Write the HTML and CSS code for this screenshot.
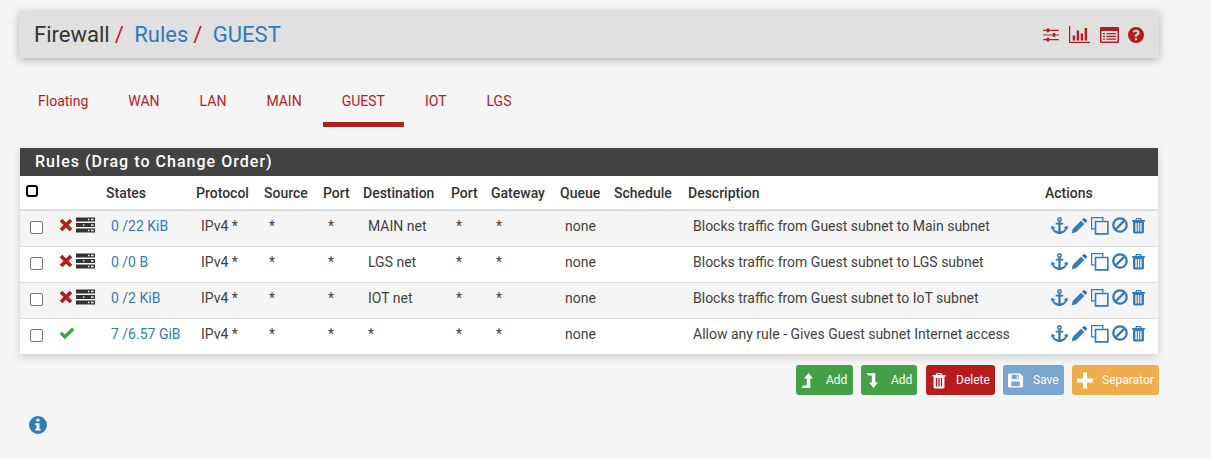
FILE: index.html
```html
<!DOCTYPE html>
<html lang="en">
<head>
<meta charset="utf-8">
<title>Firewall / Rules / GUEST</title>
<link rel="stylesheet" href="styles.css">
</head>
<body>
<svg class="defs" width="0" height="0" aria-hidden="true">
  <symbol id="anchor" viewBox="0 0 20 20"><path d="M10 1a2.600 2.600 0 0 0-1.200 4.900V7H6v2h2.800v7.300C6.600 16 4.700 14.800 4 13.200l1.500-.9L1.800 10 .8 14l1.300-.8C3.300 16.600 6.400 19 10 19s6.700-2.400 7.900-5.800l1.300.8-1-4-3.700 2.300 1.500.9c-.7 1.600-2.600 2.800-4.800 3.100V9H14V7h-2.800V5.900A2.600 2.600 0 0 0 10 1zm0 1.700a.9.900 0 1 1 0 1.800.9.900 0 0 1 0-1.800z"/></symbol>
  <symbol id="pencil" viewBox="0 0 18 18"><path d="M13.300 1.200a1 1 0 0 1 1.400 0l2.100 2.100a1 1 0 0 1 0 1.400l-1.700 1.700-3.500-3.500zM10.600 3.900l3.500 3.500-8.800 8.800L.8 17.200l1-4.500z"/></symbol>
  <symbol id="clone" viewBox="0 0 20 20"><path fill="none" stroke="currentColor" stroke-width="1.300" d="M13.500 5V1.700H1.700v11.800H5"/><path fill="none" stroke="currentColor" stroke-width="1.700" d="M5.800 5.800h13v13h-13z"/></symbol>
  <symbol id="ban" viewBox="0 0 16 16"><circle cx="8" cy="8" r="6.700" fill="none" stroke="currentColor" stroke-width="2.300"/><path d="M3.400 12.600 12.600 3.400" fill="none" stroke="currentColor" stroke-width="2.300"/></symbol>
  <symbol id="trash" viewBox="0 0 16 18"><path fill-rule="evenodd" d="M5.500 1h5l1 2.200H15v1.600h-1.200V16a1.500 1.500 0 0 1-1.500 1.500H3.700A1.500 1.500 0 0 1 2.200 16V4.800H1V3.200h3.500zM6.300 2.300 5.900 3.200h4.200l-.4-.9zM4.700 6.300v9h1.400v-9zm2.600 0v9h1.400v-9zm2.600 0v9h1.400v-9z"/></symbol>
  <symbol id="cross" viewBox="0 0 16 16"><path d="M3.800.8 8 5l4.200-4.200 3 3L11 8l4.200 4.200-3 3L8 11l-4.200 4.200-3-3L5 8 .8 3.800z"/></symbol>
  <symbol id="server" viewBox="0 0 19 16"><path fill-rule="evenodd" d="M0 .5h19v4H0zm12 1.300v1.400h1.400V1.800zm3 0v1.400h2.600V1.800zM0 6h19v4H0zm7 1.300v1.400h1.400V7.300zm8 0v1.400h2.600V7.300zM0 11.500h19v4H0zm12 1.300v1.400h1.400v-1.400zm3 0v1.400h2.600v-1.400z"/></symbol>
  <symbol id="check" viewBox="0 0 17 14"><path d="M6.200 13.200.6 7.600l2.500-2.500 3.100 3.100L13.900.6l2.500 2.500z"/></symbol>
  <symbol id="up" viewBox="0 0 12 17"><path d="M7.500 1 12 6.500H9.300V16H.5l1.800-2.500h3.500v-7H3z"/></symbol>
  <symbol id="down" viewBox="0 0 12 17"><path d="M.5 1h8.800v9.500H12L7.500 16 3 10.500h2.800v-7H2.300z"/></symbol>
  <symbol id="save" viewBox="0 0 17 17"><path fill-rule="evenodd" d="M1.500 1h11.300L16 4.200v10.300a1.500 1.500 0 0 1-1.500 1.500h-13A1.500 1.500 0 0 1 0 14.500v-12A1.500 1.500 0 0 1 1.500 1zm2.500 1.500v4.300h7.500V2.500zm5.300.7h1.500v2.900H9.300zM3.500 9.500v5h9v-5z"/></symbol>
  <symbol id="plus" viewBox="0 0 16 16"><path d="M6 0h4v6h6v4h-6v6H6v-6H0V6h6z"/></symbol>
  <symbol id="info" viewBox="0 0 18 18"><path fill-rule="evenodd" d="M9 0a9 9 0 1 1 0 18A9 9 0 0 1 9 0zM7.300 2.800v2.600h3.200V2.800zM6.200 7.200v1.700h1.200v3.800H6.200v1.700h5.500v-1.700h-1.200V7.200z"/></symbol>
  <symbol id="question" viewBox="0 0 16 16"><path fill-rule="evenodd" d="M8 0a8 8 0 1 1 0 16A8 8 0 0 1 8 0zM6.900 11.200v2.100h2.200v-2.100zM8.100 2.700c-1.700 0-2.900.8-3.600 2l1.500 1.100c.5-.6.900-1 1.800-1 .7 0 1.300.4 1.300 1 0 .6-.5.900-1.200 1.300-.9.500-1.100 1.100-1.100 1.900v.7h2.200v-.4c0-.4.200-.6.900-1 .9-.5 1.600-1.300 1.600-2.600 0-1.900-1.600-3-3.400-3z"/></symbol>
  <symbol id="sliders" viewBox="0 0 18 16"><path d="M0 2h4V.5h3V2h11v1.300H7v1.500H4V3.300H0zm0 5.300h11V5.800h3v1.500h4v1.300h-4v1.500h-3V8.600H0zm0 5.400h4v-1.500h3v1.500h11V14H7v1.500H4V14H0z"/></symbol>
  <symbol id="chart" viewBox="0 0 21 17"><path d="M0 0h1.200v15.800H21V17H0zM3.700 9.500h2.400v5H3.700zm4-5h2.400v10H7.700zm4 3h2.400v7h-2.400zm4-5.500h2.400v12.500h-2.400z"/></symbol>
  <symbol id="list" viewBox="0 0 19 16"><path fill-rule="evenodd" d="M1 0h17a1 1 0 0 1 1 1v14a1 1 0 0 1-1 1H1a1 1 0 0 1-1-1V1a1 1 0 0 1 1-1zm.5 4v10.500h16V4zM3 6h2v1.300H3zm3.500 0H16v1.300H6.500zM3 8.700h2V10H3zm3.500 0H16V10H6.500zM3 11.400h2v1.300H3zm3.500 0H16v1.300H6.500z"/></symbol>
</svg>

<header class="page-bar">
  <h1 class="crumbs">
    <span>Firewall</span><span class="sep">/</span>
    <a href="#">Rules</a><span class="sep">/</span>
    <a href="#">GUEST</a>
  </h1>
  <div class="bar-icons">
    <svg class="ico-sliders"><use href="#sliders"/></svg>
    <svg class="ico-chart"><use href="#chart"/></svg>
    <svg class="ico-list"><use href="#list"/></svg>
    <svg class="ico-question"><use href="#question"/></svg>
  </div>
</header>

<nav class="tabs">
  <a href="#">Floating</a>
  <a href="#">WAN</a>
  <a href="#">LAN</a>
  <a href="#">MAIN</a>
  <a href="#" class="active">GUEST</a>
  <a href="#">IOT</a>
  <a href="#">LGS</a>
</nav>

<section class="panel">
  <h2 class="panel-title">Rules (Drag to Change Order)</h2>
  <table class="rules">
    <colgroup>
      <col class="c1"><col class="c2"><col class="c3"><col class="c4"><col class="c5"><col class="c6"><col class="c7"><col class="c8"><col class="c9"><col class="c10"><col class="c11"><col class="c12"><col class="c13">
    </colgroup>
    <thead>
      <tr>
        <th><span class="select-all"></span></th><th></th><th>States</th><th>Protocol</th><th>Source</th><th>Port</th><th>Destination</th><th>Port</th><th>Gateway</th><th>Queue</th><th>Schedule</th><th>Description</th><th>Actions</th>
      </tr>
    </thead>
    <tbody>
      <tr class="odd">
        <td><span class="box"></span></td>
        <td class="icon-cell"><span class="status"><svg class="i-cross"><use href="#cross"/></svg><svg class="i-server"><use href="#server"/></svg></span></td>
        <td><a href="#">0 /22 KiB</a></td><td>IPv4 *</td><td>*</td><td>*</td><td>MAIN net</td><td>*</td><td>*</td><td>none</td><td></td>
        <td>Blocks traffic from Guest subnet to Main subnet</td>
        <td class="icon-cell"><span class="actions"><svg class="a-anchor"><use href="#anchor"/></svg><svg class="a-pencil"><use href="#pencil"/></svg><svg class="a-clone"><use href="#clone"/></svg><svg class="a-ban"><use href="#ban"/></svg><svg class="a-trash"><use href="#trash"/></svg></span></td>
      </tr>
      <tr>
        <td><span class="box"></span></td>
        <td class="icon-cell"><span class="status"><svg class="i-cross"><use href="#cross"/></svg><svg class="i-server"><use href="#server"/></svg></span></td>
        <td><a href="#">0 /0 B</a></td><td>IPv4 *</td><td>*</td><td>*</td><td>LGS net</td><td>*</td><td>*</td><td>none</td><td></td>
        <td>Blocks traffic from Guest subnet to LGS subnet</td>
        <td class="icon-cell"><span class="actions"><svg class="a-anchor"><use href="#anchor"/></svg><svg class="a-pencil"><use href="#pencil"/></svg><svg class="a-clone"><use href="#clone"/></svg><svg class="a-ban"><use href="#ban"/></svg><svg class="a-trash"><use href="#trash"/></svg></span></td>
      </tr>
      <tr class="odd">
        <td><span class="box"></span></td>
        <td class="icon-cell"><span class="status"><svg class="i-cross"><use href="#cross"/></svg><svg class="i-server"><use href="#server"/></svg></span></td>
        <td><a href="#">0 /2 KiB</a></td><td>IPv4 *</td><td>*</td><td>*</td><td>IOT net</td><td>*</td><td>*</td><td>none</td><td></td>
        <td>Blocks traffic from Guest subnet to IoT subnet</td>
        <td class="icon-cell"><span class="actions"><svg class="a-anchor"><use href="#anchor"/></svg><svg class="a-pencil"><use href="#pencil"/></svg><svg class="a-clone"><use href="#clone"/></svg><svg class="a-ban"><use href="#ban"/></svg><svg class="a-trash"><use href="#trash"/></svg></span></td>
      </tr>
      <tr>
        <td><span class="box"></span></td>
        <td class="icon-cell"><span class="status"><svg class="i-check"><use href="#check"/></svg></span></td>
        <td><a href="#">7 /6.57 GiB</a></td><td>IPv4 *</td><td>*</td><td>*</td><td>*</td><td>*</td><td>*</td><td>none</td><td></td>
        <td>Allow any rule - Gives Guest subnet Internet access</td>
        <td class="icon-cell"><span class="actions"><svg class="a-anchor"><use href="#anchor"/></svg><svg class="a-pencil"><use href="#pencil"/></svg><svg class="a-clone"><use href="#clone"/></svg><svg class="a-ban"><use href="#ban"/></svg><svg class="a-trash"><use href="#trash"/></svg></span></td>
      </tr>
    </tbody>
  </table>
</section>

<div class="buttons">
  <a href="#" class="btn green w-add"><svg class="b-arrow"><use href="#up"/></svg>Add</a>
  <a href="#" class="btn green w-add2"><svg class="b-arrow"><use href="#down"/></svg>Add</a>
  <a href="#" class="btn red"><svg class="b-icon"><use href="#trash"/></svg>Delete</a>
  <a href="#" class="btn blue"><svg class="b-icon"><use href="#save"/></svg>Save</a>
  <a href="#" class="btn orange"><svg class="b-icon"><use href="#plus"/></svg>Separator</a>
</div>

<div class="info-row"><svg class="info"><use href="#info"/></svg></div>
</body>
</html>
```

FILE: styles.css
```css
* { box-sizing: border-box; }
html, body { margin: 0; height: 100%; }
body {
  background: #f5f5f5;
  font-family: Roboto, "Liberation Sans", sans-serif;
  font-size: 14px;
  color: #424242;
  padding: 11px 52px 0 19px;
  overflow: hidden;
}
a { color: #337ab7; text-decoration: none; }
svg { display: block; fill: currentColor; }
.defs { position: absolute; }

.page-bar {
  display: flex;
  align-items: center;
  justify-content: space-between;
  height: 47px;
  padding: 0 15px;
  background: #e0e0e0;
  border-radius: 3px;
  box-shadow: 0 2px 8px rgba(0,0,0,.28);
}
.crumbs { margin: 0; font-size: 22px; font-weight: 400; color: #333; display: flex; line-height: 1; }
.crumbs .sep { color: #b71c1c; margin: 0 10.500px 0 5px; font-size: 22px; }
.bar-icons { display: flex; align-items: center; color: #b71c1c; gap: 10px; }
.ico-sliders { width: 16px; height: 14px; }
.ico-chart { width: 21px; height: 17px; }
.ico-list { width: 19px; height: 16px; }
.ico-question { width: 16px; height: 16px; margin-left: -1px; }

.tabs { display: flex; margin: 11px 0 0 -1px; }
.tabs a {
  color: #b71c1c;
  height: 58px;
  padding: 22px 20px 0;
  line-height: 20px;
  border-bottom: 5px solid transparent;
}
.tabs a.active { border-bottom-color: #b71c1c; padding: 22px 19px 0; margin: 0 1px; }

.panel {
  margin: 21px 1px 0;
  background: #fff;
  box-shadow: 0 3px 8px rgba(0,0,0,.16);
}
.panel-title {
  margin: 0;
  height: 28px;
  padding: 0 15px;
  background: #424242;
  color: #fff;
  font-size: 16px;
  font-weight: 500;
  line-height: 28px;
  letter-spacing: 1.030px;
}

.rules { width: 100%; table-layout: fixed; border-collapse: separate; border-spacing: 0; }
.c1 { width: 28px; } .c2 { width: 53px; } .c3 { width: 90px; } .c4 { width: 68px; }
.c5 { width: 59px; } .c6 { width: 40px; } .c7 { width: 88px; } .c8 { width: 40px; }
.c9 { width: 69px; } .c10 { width: 54px; } .c11 { width: 74px; } .c12 { width: 357px; } .c13 { width: 118px; }

.rules th {
  height: 35px;
  padding: 1px 0 0 5px;
  text-align: left;
  font-weight: 500;
  white-space: nowrap;
  color: #333;
  border-bottom: 2px solid #ddd;
}
.rules td {
  height: 36px;
  padding: 0 0 5px 10px;
  white-space: nowrap;
  border-top: 1px solid #ddd;
}
.rules tbody tr:first-child td { border-top: 0; height: 35px; padding-bottom: 5px; }
.rules tr.odd td { background: #f5f5f5; }
.rules td:first-child,
.rules tbody tr:first-child td:first-child { padding: 0 0 3px 10px; }
.rules th:first-child { padding: 0 0 4px 6px; }
.rules td.icon-cell,
.rules tbody tr:first-child td.icon-cell { padding-bottom: 7px; }

.select-all { display: block; width: 12px; height: 12px; border: 2px solid #000; border-radius: 3px; }
.box { display: block; width: 13px; height: 13px; background: #fff; border: 1px solid #767676; border-radius: 2px; }

.rules td:nth-child(2) { padding-left: 0; }
.status { display: flex; align-items: center; margin-left: 11px; gap: 3px; }
.i-cross { width: 14px; height: 14px; color: #b71c1c; }
.i-server { width: 19px; height: 16px; color: #333; }
.i-check { width: 16px; height: 13px; color: #43a047; margin-top: 1px; }

.actions { display: flex; align-items: center; color: #337ab7; }
.a-anchor { width: 19px; height: 19px; }
.a-pencil { width: 17px; height: 17px; margin-left: 2px; }
.a-clone { width: 19px; height: 19px; margin-left: 2px; }
.a-ban { width: 16px; height: 16px; margin-left: 3px; }
.a-trash { width: 15px; height: 17px; margin-left: 3px; }

.buttons { display: flex; justify-content: flex-end; gap: 8px; margin-top: 11px; }
.btn {
  display: flex;
  align-items: center;
  height: 30px;
  padding: 0 5px 0 5px;
  border-radius: 3px;
  color: #fff;
  font-size: 12px;
  line-height: 1;
}
.green { background: #43a047; }
.w-add { width: 57px; }
.w-add2 { width: 56px; margin-right: 1px; }
.red { background: #b71c1c; width: 69px; }
.blue { background: #7aa6cd; width: 61px; }
.orange { background: #f0ad4e; width: 87px; }
.b-arrow { width: 12px; height: 17px; margin-right: 13px; flex: none; }
.b-icon { width: 16px; height: 17px; margin-right: 9px; flex: none; }

.info-row { margin: 21px 0 0 10px; }
.info { width: 18px; height: 18px; color: #337ab7; }
```
